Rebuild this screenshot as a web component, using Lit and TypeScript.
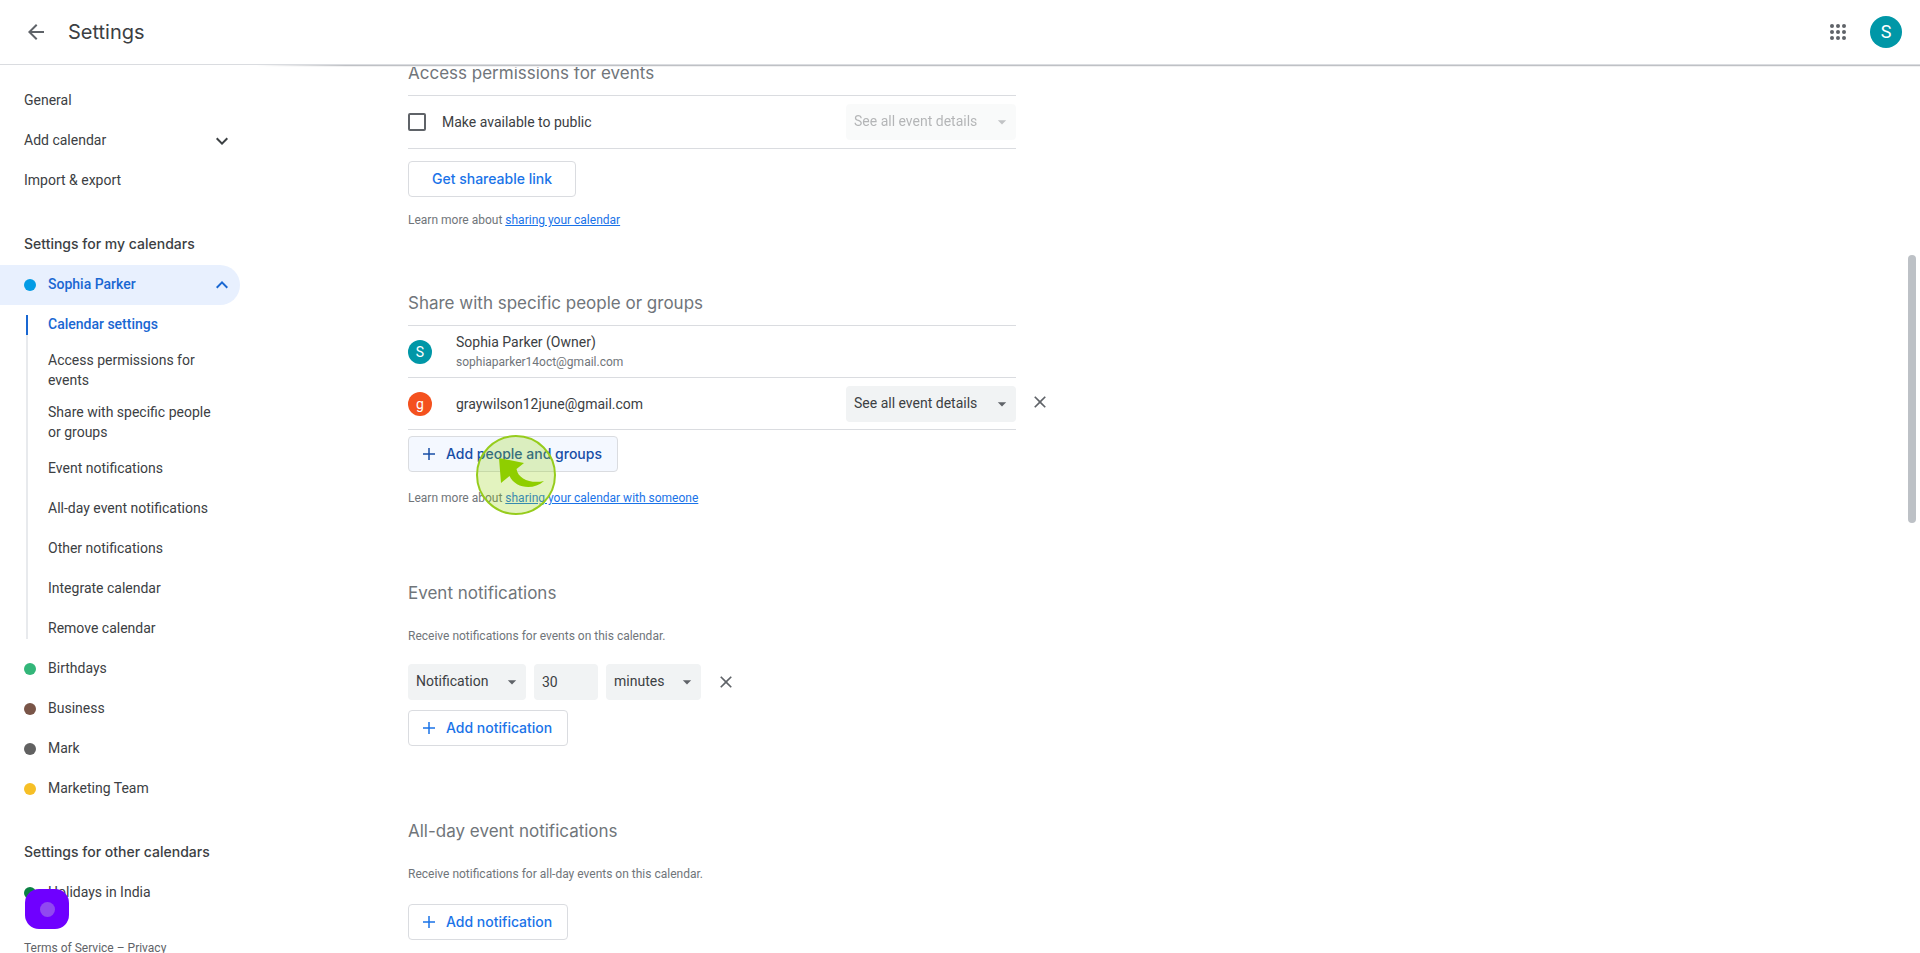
import { LitElement, html, css, svg } from "lit";
import { customElement } from "lit/decorators.js";
import { classMap } from "lit/directives/class-map.js";

interface Cal { name: string; color: string; }

const CALENDARS: Cal[] = [
  { name: "Birthdays", color: "green" },
  { name: "Business", color: "brown" },
  { name: "Mark", color: "gray" },
  { name: "Marketing Team", color: "yellow" },
];

const SECTIONS = [
  "Calendar settings",
  "Access permissions for events",
  "Share with specific people or groups",
  "Event notifications",
  "All-day event notifications",
  "Other notifications",
  "Integrate calendar",
  "Remove calendar",
];

const icon = (d: string, size = 24) => html`<svg
  width=${size} height=${size} viewBox="0 0 24 24" fill="currentColor" aria-hidden="true"
>${svg`<path d=${d}></path>`}</svg>`;

const BACK = "M20 11H7.83l5.59-5.59L12 4l-8 8 8 8 1.41-1.41L7.83 13H20v-2z";
const APPS = [6, 12, 18];
const CLOSE = "M19 6.41L17.59 5 12 10.59 6.41 5 5 6.41 10.59 12 5 17.59 6.41 19 12 13.41 17.59 19 19 17.59 13.41 12z";
const DOWN = "M7.41 8.59L12 13.17l4.59-4.58L18 10l-6 6-6-6z";
const UP = "M7.41 15.41L12 10.83l4.59 4.58L18 14l-6-6-6 6z";
const PLUS = "M20 13h-7v7h-2v-7H4v-2h7V4h2v7h7v2z";

@customElement("app-root")
export class AppRoot extends LitElement {
  static styles = css`
    :host {
      display: flex;
      flex-direction: column;
      height: 100vh;
      overflow: hidden;
      background: #fff;
      color: #3c4043;
      font: 14px/20px Roboto, "Liberation Sans", sans-serif;
    }
    *, *::before { box-sizing: border-box; }
    button, input, select { font: inherit; color: inherit; margin: 0; }
    button { cursor: pointer; }
    a { color: inherit; text-decoration: none; }
    h1, h2, h3, p, ul { margin: 0; padding: 0; font-weight: 400; list-style: none; }
    svg { display: block; flex: none; }

    header {
      display: flex;
      align-items: center;
      flex: none;
      height: 65px;
      padding: 0 18px 0 24px;
      border-bottom: 1px solid #dadce0;
    }
    h1 { flex: 1; padding-left: 20px; font-size: 20px; line-height: 28px; font-family: Inter, sans-serif; }
    .icon-button {
      display: flex;
      padding: 0;
      border: 0;
      background: none;
      color: #5f6368;
    }
    .avatar {
      display: flex;
      align-items: center;
      justify-content: center;
      flex: none;
      width: 24px;
      height: 24px;
      padding: 0;
      border: 0;
      border-radius: 50%;
      background: #0097a7;
      color: #fff;
    }
    .avatar.orange { background: #f4511e; }
    .avatar.account { width: 32px; height: 32px; margin-left: 20px; font-size: 18px; }

    .body { display: flex; flex: 1; min-height: 0; }
    nav { flex: none; width: 256px; padding-top: 16px; overflow: hidden; }
    .item {
      display: flex;
      align-items: center;
      width: 240px;
      min-height: 40px;
      padding: 4px 16px 6px 24px;
    }
    .item span { flex: 1; }
    .item svg { color: #3c4043; margin: 2px -10px 0 0; }
    .dot { flex: none; width: 12px; height: 12px; margin: 2px 12px 0 0; border-radius: 50%; }
    .blue { background: #039be5; }
    .green { background: #33b679; }
    .brown { background: #795548; }
    .gray { background: #616161; }
    .yellow { background: #f6bf26; }
    .forest { background: #0b8043; }
    .item.active { background: #e8f0fe; border-radius: 0 20px 20px 0; }
    .item.active, .item.active svg, .current { color: #1967d2; font-weight: 500; }
    h3 { padding: 33px 24px 11px; font: 500 14px/20px Inter, sans-serif; white-space: nowrap; }
    .tree { position: relative; }
    .tree::before {
      content: "";
      position: absolute;
      left: 26px;
      top: 10px;
      bottom: 10px;
      width: 2px;
      background: linear-gradient(#1967d2 20px, #e8eaed 20px);
    }
    .tree .item { padding: 5px 16px 7px 48px; }
    .terms { padding: 25px 24px 16px; font-size: 12px; line-height: 20px; color: #5f6368; }

    main {
      position: relative;
      flex: 1;
      min-width: 0;
      padding: 0 32px 0 152px;
      overflow: hidden;
    }
    .shade {
      position: absolute;
      inset: 0 0 auto 0;
      height: 2px;
      background: linear-gradient(#bfc1c5 1px, #f1f1f2 1px);
      mask-image: linear-gradient(90deg, transparent, #000 90px);
    }
    .thumb {
      position: absolute;
      top: 190px;
      right: 4px;
      width: 8px;
      height: 268px;
      border-radius: 4px;
      background: #bdc1c6;
    }
    section { max-width: 608px; padding-bottom: 73px; }
    section.first { margin-top: -4px; padding-bottom: 61px; }
    h2 { font: 17px/24px Inter, sans-serif; color: #70757a; }
    .rows { margin-top: 10px; border-top: 1px solid #dadce0; }
    .row {
      position: relative;
      display: flex;
      align-items: center;
      height: 52px;
      border-bottom: 1px solid #dadce0;
    }
    .row .grow { flex: 1; display: flex; flex-direction: column; padding-left: 24px; }
    .row.public { height: 53px; }
    .row.public .grow { padding-left: 16px; }
    .row .close { position: absolute; left: calc(100% + 14px); margin-bottom: 4px; }
    .small { font-size: 12px; line-height: 20px; color: #70757a; }
    .small a { color: #1a73e8; text-decoration: underline; }
    input[type="checkbox"] {
      appearance: none;
      width: 18px;
      height: 18px;
      border: 2px solid #5f6368;
      border-radius: 2px;
    }
    .select { position: relative; display: flex; }
    .select svg { position: absolute; right: 4px; top: 8px; color: #5f6368; pointer-events: none; }
    select, .number {
      appearance: none;
      height: 36px;
      padding: 0 8px;
      border: 0;
      border-radius: 4px;
      background: #f1f3f4;
    }
    select { padding-bottom: 2px; }
    .wide select { width: 170px; }
    .kind select { width: 118px; }
    .unit select { width: 95px; }
    .number { width: 64px; }
    select:disabled { color: #3c4043; opacity: 1; }
    .off { opacity: 0.38; }
    .outlined {
      display: flex;
      align-items: center;
      height: 36px;
      padding: 0 15px 0 11px;
      border: 1px solid #dadce0;
      border-radius: 4px;
      background: #fff;
      color: #1a73e8;
      font: 500 14px/20px Inter, sans-serif;
      gap: 8px;
    }
    .outlined.plain { margin: 12px 0 13px; padding: 0 23px; }
    .outlined.hover { margin: 6px 0 16px; background: #f4f8ff; color: #174ea6; }
    .fields { display: flex; align-items: center; gap: 8px; margin: 18px 0 10px; }
    .fields .close { margin-left: 7px; }
    .hint { margin-top: 21px; }
    .hint + .outlined { margin-top: 20px; }

    .pointer { position: absolute; left: 219px; top: 369px; }
    .recorder {
      position: fixed;
      left: 25px;
      bottom: 24px;
      display: flex;
      align-items: center;
      justify-content: center;
      width: 44px;
      height: 40px;
      padding: 0;
      border: 0;
      border-radius: 14px;
      background: #6f00ff;
    }
    .recorder i { width: 15px; height: 15px; border-radius: 50%; background: #9049f0; }
  `;

  private select(label: string, value: string, kind: string, disabled = false) {
    return html`<div class="select ${kind} ${disabled ? "off" : ""}">
      <select aria-label=${label} ?disabled=${disabled}><option>${value}</option></select>
      ${icon("M7 10l5 5 5-5z", 20)}
    </div>`;
  }

  private close(label: string) {
    return html`<button class="icon-button close" aria-label=${label}>${icon(CLOSE, 20)}</button>`;
  }

  private calendar(c: Cal) {
    return html`<a class="item" href="#"><i class="dot ${c.color}"></i><span>${c.name}</span></a>`;
  }

  render() {
    return html`
      <header>
        <button class="icon-button" aria-label="Back">${icon(BACK)}</button>
        <h1>Settings</h1>
        <button class="icon-button" aria-label="Google apps">
          <svg width="24" height="24" viewBox="0 0 24 24" fill="currentColor">
            ${APPS.map((y) => APPS.map((x) => svg`<circle cx=${x} cy=${y} r="2"></circle>`))}
          </svg>
        </button>
        <button class="avatar account" aria-label="Account">S</button>
      </header>
      <div class="body">
        <nav>
          <a class="item" href="#"><span>General</span></a>
          <a class="item" href="#"><span>Add calendar</span>${icon(DOWN)}</a>
          <a class="item" href="#"><span>Import &amp; export</span></a>
          <h3>Settings for my calendars</h3>
          <a class="item active" href="#"><i class="dot blue"></i><span>Sophia Parker</span>${icon(UP)}</a>
          <ul class="tree">
            ${SECTIONS.map((s, i) => html`<li><a class=${classMap({ item: true, current: i === 0 })} href="#">${s}</a></li>`)}
          </ul>
          ${CALENDARS.map((c) => this.calendar(c))}
          <h3>Settings for other calendars</h3>
          ${this.calendar({ name: "Holidays in India", color: "forest" })}
          <p class="terms"><a href="#">Terms of Service</a> – <a href="#">Privacy</a></p>
        </nav>
        <main>
          <section class="first">
            <h2>Access permissions for events</h2>
            <div class="rows">
              <div class="row public">
                <input type="checkbox" id="public" />
                <label class="grow" for="public">Make available to public</label>
                ${this.select("Public access", "See all event details", "wide", true)}
              </div>
            </div>
            <button class="outlined plain">Get shareable link</button>
            <p class="small">Learn more about <a href="#">sharing your calendar</a></p>
          </section>
          <section>
            <h2>Share with specific people or groups</h2>
            <div class="rows">
              <div class="row">
                <div class="avatar">S</div>
                <div class="grow"><span>Sophia Parker (Owner)</span><span class="small">sophiaparker14oct@gmail.com</span></div>
              </div>
              <div class="row">
                <div class="avatar orange">g</div>
                <div class="grow">graywilson12june@gmail.com</div>
                ${this.select("Permissions", "See all event details", "wide")}
                ${this.close("Remove person")}
              </div>
            </div>
            <button class="outlined hover">${icon(PLUS, 18)}Add people and groups</button>
            <p class="small">Learn more about <a href="#">sharing your calendar with someone</a></p>
          </section>
          <section>
            <h2>Event notifications</h2>
            <p class="small hint">Receive notifications for events on this calendar.</p>
            <div class="fields">
              ${this.select("Type", "Notification", "kind")}
              <input class="number" aria-label="Amount" value="30" />
              ${this.select("Unit", "minutes", "unit")}
              ${this.close("Remove notification")}
            </div>
            <button class="outlined">${icon(PLUS, 18)}Add notification</button>
          </section>
          <section>
            <h2>All-day event notifications</h2>
            <p class="small hint">Receive notifications for all-day events on this calendar.</p>
            <button class="outlined">${icon(PLUS, 18)}Add notification</button>
          </section>
          <div class="shade"></div>
          <div class="thumb"></div>
          <svg class="pointer" width="82" height="82" viewBox="0 0 82 82" aria-hidden="true">
            <circle cx="41" cy="41" r="39" fill="#8fce00" fill-opacity=".25" stroke="#96cc1c" stroke-width="2"></circle>
            <path d="M24 24L49 29L41.500 35C43 45 56 50 69 47C58 57 40 54 34.500 42L26 49Z" fill="#8fce00"></path>
          </svg>
        </main>
      </div>
      <button class="recorder" aria-label="Recorder"><i></i></button>
    `;
  }
}
